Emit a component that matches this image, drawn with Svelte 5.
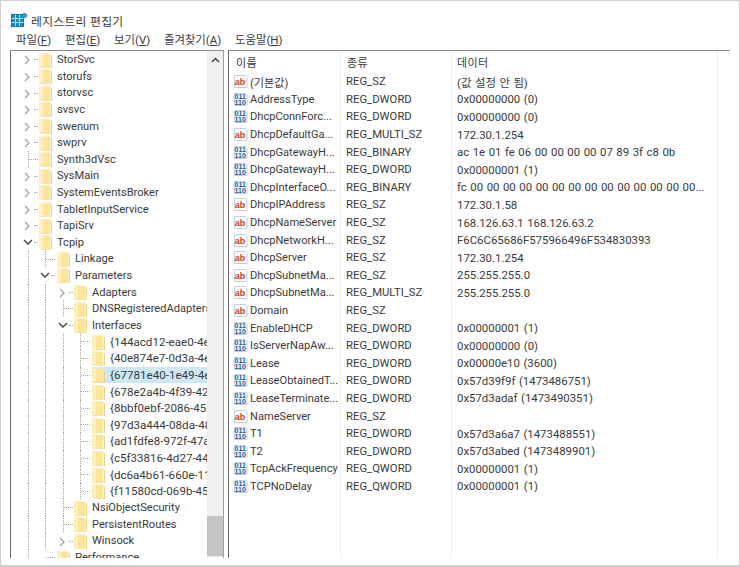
<script lang="ts">
	const menus = [
		['파일', 'F'],
		['편집', 'E'],
		['보기', 'V'],
		['즐겨찾기', 'A'],
		['도움말', 'H']
	];

	// lv: depth, arrow: '' | '>' | 'v', guides: columns with a dotted line running through the row
	const tree = [
		{ name: 'StorSvc', lv: 0, arrow: '>', guides: [] },
		{ name: 'storufs', lv: 0, arrow: '>', guides: [] },
		{ name: 'storvsc', lv: 0, arrow: '>', guides: [] },
		{ name: 'svsvc', lv: 0, arrow: '>', guides: [] },
		{ name: 'swenum', lv: 0, arrow: '>', guides: [] },
		{ name: 'swprv', lv: 0, arrow: '>', guides: [] },
		{ name: 'Synth3dVsc', lv: 0, arrow: '', guides: [0] },
		{ name: 'SysMain', lv: 0, arrow: '>', guides: [] },
		{ name: 'SystemEventsBroker', lv: 0, arrow: '>', guides: [] },
		{ name: 'TabletInputService', lv: 0, arrow: '>', guides: [] },
		{ name: 'TapiSrv', lv: 0, arrow: '>', guides: [] },
		{ name: 'Tcpip', lv: 0, arrow: 'v', guides: [] },
		{ name: 'Linkage', lv: 1, arrow: '', guides: [0, 1] },
		{ name: 'Parameters', lv: 1, arrow: 'v', guides: [0] },
		{ name: 'Adapters', lv: 2, arrow: '>', guides: [0, 1] },
		{ name: 'DNSRegisteredAdapters', lv: 2, arrow: '', guides: [0, 1, 2] },
		{ name: 'Interfaces', lv: 2, arrow: 'v', guides: [0, 1] },
		{ name: '{144acd12-eae0-4e', lv: 3, arrow: '', guides: [0, 1, 2, 3] },
		{ name: '{40e874e7-0d3a-4e', lv: 3, arrow: '', guides: [0, 1, 2, 3] },
		{ name: '{67781e40-1e49-4e', lv: 3, arrow: '', guides: [0, 1, 2, 3], selected: true },
		{ name: '{678e2a4b-4f39-42', lv: 3, arrow: '', guides: [0, 1, 2, 3] },
		{ name: '{8bbf0ebf-2086-45', lv: 3, arrow: '', guides: [0, 1, 2, 3] },
		{ name: '{97d3a444-08da-48', lv: 3, arrow: '', guides: [0, 1, 2, 3] },
		{ name: '{ad1fdfe8-972f-47a', lv: 3, arrow: '', guides: [0, 1, 2, 3] },
		{ name: '{c5f33816-4d27-44', lv: 3, arrow: '', guides: [0, 1, 2, 3] },
		{ name: '{dc6a4b61-660e-11', lv: 3, arrow: '', guides: [0, 1, 2, 3] },
		{ name: '{f11580cd-069b-45', lv: 3, arrow: '', guides: [0, 1, 2, 3] },
		{ name: 'NsiObjectSecurity', lv: 2, arrow: '', guides: [0, 1, 2] },
		{ name: 'PersistentRoutes', lv: 2, arrow: '', guides: [0, 1, 2] },
		{ name: 'Winsock', lv: 2, arrow: '>', guides: [0, 1] },
		{ name: 'Performance', lv: 1, arrow: '', guides: [0] }
	];

	const values = [
		['(기본값)', 'REG_SZ', '(값 설정 안 됨)'],
		['AddressType', 'REG_DWORD', '0x00000000 (0)'],
		['DhcpConnForc...', 'REG_DWORD', '0x00000000 (0)'],
		['DhcpDefaultGa...', 'REG_MULTI_SZ', '172.30.1.254'],
		['DhcpGatewayH...', 'REG_BINARY', 'ac 1e 01 fe 06 00 00 00 00 07 89 3f c8 0b'],
		['DhcpGatewayH...', 'REG_DWORD', '0x00000001 (1)'],
		['DhcpInterfaceO...', 'REG_BINARY', 'fc ' + '00 '.repeat(13) + '00...'],
		['DhcpIPAddress', 'REG_SZ', '172.30.1.58'],
		['DhcpNameServer', 'REG_SZ', '168.126.63.1 168.126.63.2'],
		['DhcpNetworkH...', 'REG_SZ', 'F6C6C65686F575966496F534830393'],
		['DhcpServer', 'REG_SZ', '172.30.1.254'],
		['DhcpSubnetMa...', 'REG_SZ', '255.255.255.0'],
		['DhcpSubnetMa...', 'REG_MULTI_SZ', '255.255.255.0'],
		['Domain', 'REG_SZ', ''],
		['EnableDHCP', 'REG_DWORD', '0x00000001 (1)'],
		['IsServerNapAw...', 'REG_DWORD', '0x00000000 (0)'],
		['Lease', 'REG_DWORD', '0x00000e10 (3600)'],
		['LeaseObtainedT...', 'REG_DWORD', '0x57d39f9f (1473486751)'],
		['LeaseTerminate...', 'REG_DWORD', '0x57d3adaf (1473490351)'],
		['NameServer', 'REG_SZ', ''],
		['T1', 'REG_DWORD', '0x57d3a6a7 (1473488551)'],
		['T2', 'REG_DWORD', '0x57d3abed (1473489901)'],
		['TcpAckFrequency', 'REG_QWORD', '0x00000001 (1)'],
		['TCPNoDelay', 'REG_QWORD', '0x00000001 (1)']
	];

	const isText = (type: string) => type.includes('SZ');
</script>

<div class="window">
	<header class="title">
		<svg class="app-icon" width="16" height="14" viewBox="0 0 16 14">
			<rect x="0.5" y="1.5" width="12" height="12" fill="#1a8cc0" stroke="#0f6f9e" />
			<path d="M4.500 1.500v12M8.500 1.500v12M.5 5.500h12M.5 9.500h12" stroke="#a8dcf0" fill="none" />
			<path d="M13.500 0l2.300 1.300v2.400l-2.300 1.300-2.300-1.300V1.300z" fill="#2fa0d0" stroke="#0f6f9e" stroke-width="0.5" />
		</svg>
		<span>레지스트리 편집기</span>
	</header>

	<nav class="menu">
		{#each menus as [label, key]}
			<span>{label}(<u>{key}</u>)</span>
		{/each}
	</nav>

	<main class="panes">
		<section class="tree-pane">
			<div class="tree">
				{#each tree as node}
					<div class="node lv{node.lv}">
						{#each node.guides as g}
							<i class="guide g{g}"></i>
						{/each}
						<i class="tick" class:short={node.arrow}></i>
						{#if node.arrow === '>'}
							<svg class="arrow" width="8" height="10" viewBox="0 0 8 10"><path d="M2 1l4 4-4 4" fill="none" stroke="#a6a6a6" stroke-width="1.4" /></svg>
						{:else if node.arrow === 'v'}
							<svg class="arrow" width="10" height="8" viewBox="0 0 10 8"><path d="M1 2l4 4 4-4" fill="none" stroke="#404040" stroke-width="1.4" /></svg>
						{/if}
						<span class="item" class:selected={node.selected}>
							<svg class="folder" width="13" height="15" viewBox="0 0 13 15">
								<path d="M0 0.500h11.500v14H0z" fill="#fce59a" />
								<path d="M0 0.500h4v14H0z" fill="#fdf0bd" />
								<path d="M12.500 2v13H2" fill="none" stroke="#e8d596" />
							</svg>
							<span class="label">{node.name}</span>
						</span>
					</div>
				{/each}
			</div>
			<div class="scrollbar">
				<svg class="up" width="9" height="6" viewBox="0 0 9 6"><path d="M1 5l3.500-3.500L8 5" fill="none" stroke="#444" stroke-width="1.500" /></svg>
				<div class="thumb"></div>
			</div>
		</section>

		<section class="list-pane">
			<div class="row head">
				<span>이름</span>
				<span>종류</span>
				<span>데이터</span>
			</div>
			{#each values as [name, type, data]}
				<div class="row">
					<span class="name">
						<svg class="reg-icon" width="15" height="15" viewBox="0 0 15 15">
							<path d="M1.500 1.500h11l1.500 1.500v10.500H1.500z" fill={isText(type) ? '#fff' : '#f1f6fb'} stroke="#c3d0dd" />
							{#if isText(type)}
								<text x="1.800" y="10.500" class="ab">ab</text>
							{:else}
								<text x="1.600" y="7" class="bits">011</text>
								<text x="1.600" y="13.200" class="bits">110</text>
							{/if}
						</svg>
						{name}
					</span>
					<span class="type">{type}</span>
					<span class="data">{data}</span>
				</div>
			{/each}
		</section>
	</main>
</div>

<style>
	:global(body) {
		background: #fff;
	}

	.window {
		box-sizing: border-box;
		width: 740px;
		height: 567px;
		border: 1px solid #cfcfcf;
		border-bottom-width: 2px;
		display: flex;
		flex-direction: column;
		overflow: hidden;
		background: #fff;
		color: #3a3a3a;
		font-family: Roboto, 'Noto Sans CJK KR', sans-serif;
		font-size: 11.100px;
	}

	.title {
		height: 22px;
		margin-top: 8px;
		padding-left: 10px;
		display: flex;
		align-items: center;
		gap: 4px;
		font-size: 11.800px;
		letter-spacing: 0.3px;
	}

	.menu {
		height: 16px;
		margin-bottom: 3px;
		padding-left: 15px;
		display: flex;
		align-items: center;
		gap: 13.800px;
		font-size: 11.400px;
	}

	.panes {
		flex: 1;
		min-height: 0;
		margin: 0 0 7px 9px;
		display: flex;
		gap: 4px;
	}

	.tree-pane {
		flex: none;
		width: 212px;
		display: flex;
		overflow: hidden;
		border-top: 1px solid #8c8c8c;
		border-left: 1px solid #6e6e6e;
		border-right: 1px solid #a0a0a0;
	}

	.tree {
		flex: 1;
		min-width: 0;
		overflow: hidden;
		padding-top: 0.400px;
	}

	.node {
		position: relative;
		height: 16.600px;
		display: flex;
		align-items: center;
		white-space: nowrap;
	}

	.lv0 { padding-left: 28px; }
	.lv1 { padding-left: 46px; }
	.lv2 { padding-left: 63px; }
	.lv3 { padding-left: 81px; font-size: 11.600px; }

	.guide {
		position: absolute;
		top: 0;
		bottom: 0;
		border-left: 1px dotted #a8a8a8;
	}

	.g0 { left: 17px; }
	.g1 { left: 34px; }
	.g2 { left: 52px; }
	.g3 { left: 69px; }

	.tick {
		position: absolute;
		top: 8px;
		width: 9px;
		border-top: 1px dotted #a8a8a8;
	}

	.tick.short {
		width: 4px;
		margin-left: 5px;
	}

	.lv0 .tick { left: 18px; }
	.lv1 .tick { left: 35px; }
	.lv2 .tick { left: 53px; }
	.lv3 .tick { left: 70px; }

	.arrow {
		position: absolute;
		top: 4px;
	}

	.lv0 .arrow { left: 12px; }
	.lv1 .arrow { left: 29px; }
	.lv2 .arrow { left: 47px; }

	.item {
		position: relative;
		display: flex;
		align-items: center;
		flex: 1;
		height: 100%;
		gap: 5px;
	}

	.item.selected {
		background: #cce8f7;
	}

	.folder {
		flex: none;
		margin-top: 1px;
	}

	.scrollbar {
		flex: none;
		width: 16px;
		display: flex;
		flex-direction: column;
		align-items: center;
		background: #f0f0f0;
		position: relative;
	}

	.up {
		margin-top: 6px;
	}

	.thumb {
		position: absolute;
		left: 0;
		right: 0;
		bottom: 2px;
		height: 40px;
		background: #c4c4c4;
	}

	.list-pane {
		flex: 1;
		min-width: 0;
		margin-right: 9px;
		border-top: 1px solid #8c8c8c;
		border-left: 1px solid #6e6e6e;
		position: relative;
		background:
			linear-gradient(#e8eef2, #e8eef2) 111px 0 / 1px 100% no-repeat,
			linear-gradient(#e8eef2, #e8eef2) 222px 0 / 1px 100% no-repeat,
			linear-gradient(#e8eef2, #e8eef2) 488px 0 / 1px 100% no-repeat;
	}

	.row {
		height: 17.600px;
		display: grid;
		grid-template-columns: 117px 111px 1fr;
		align-items: center;
		white-space: nowrap;
	}

	.head {
		height: 22px;
		grid-template-columns: 111px 110px 1fr;
		padding-left: 7px;
		font-size: 11px;
		letter-spacing: 0.4px;
	}

	.name {
		display: flex;
		align-items: center;
		gap: 2px;
		padding-left: 4px;
	}

	.type {
		font-size: 11.300px;
	}

	.data {
		font-size: 11.400px;
		word-spacing: 0.700px;
	}

	.reg-icon {
		flex: none;
	}

	.ab {
		font: bold 9px 'Liberation Sans', sans-serif;
		fill: #c8401e;
	}

	.bits {
		font: bold 7px 'Liberation Sans', sans-serif;
		fill: #1d5a9a;
	}
</style>
